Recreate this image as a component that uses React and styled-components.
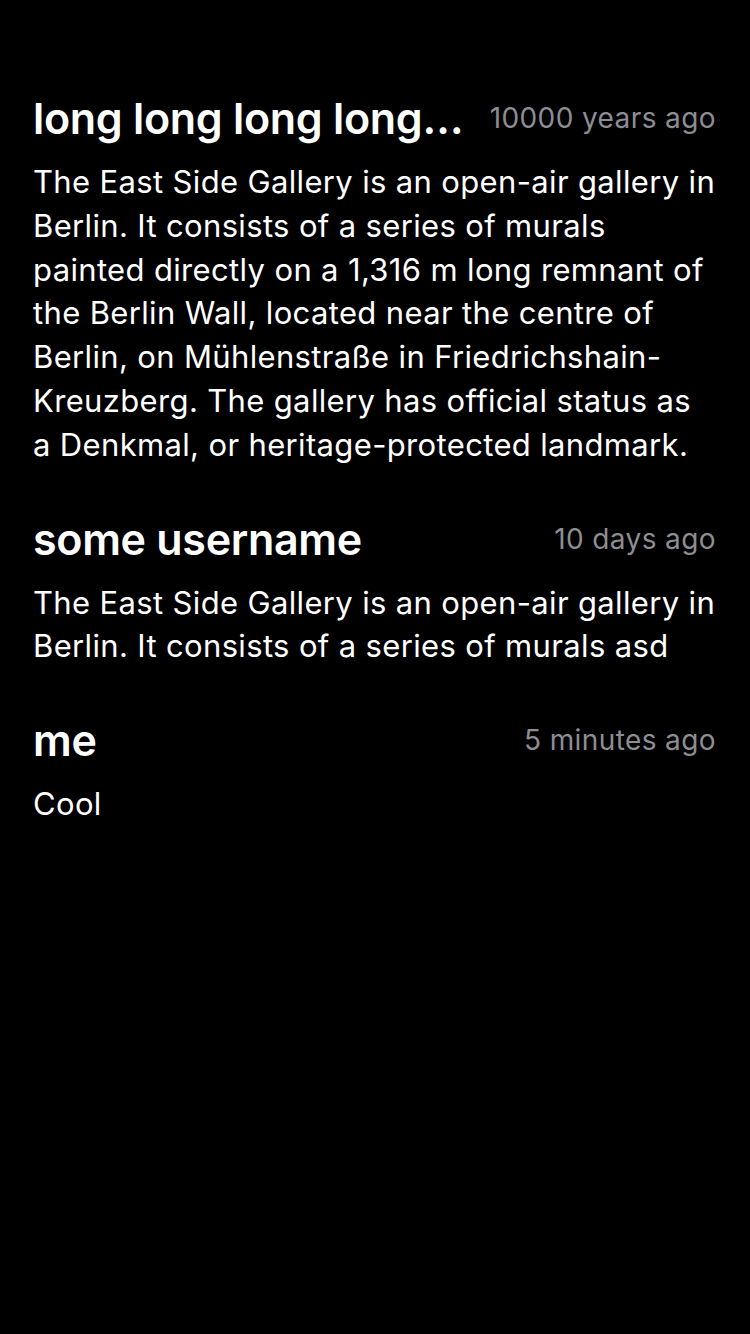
import React from "react";
import styled, { createGlobalStyle } from "styled-components";

const comments = [
  {
    id: 1,
    user: "long long long long long long long username",
    time: "10000 years ago",
    text:
      "The East Side Gallery is an open-air gallery in Berlin. It consists of a series of murals painted directly on a 1,316 m long remnant of the Berlin Wall, located near the centre of Berlin, on Mühlenstraße in Friedrichshain-Kreuzberg. The gallery has official status as a Denkmal, or heritage-protected landmark.",
  },
  {
    id: 2,
    user: "some username",
    time: "10 days ago",
    text:
      "The East Side Gallery is an open-air gallery in Berlin. It consists of a series of murals asd",
  },
  {
    id: 3,
    user: "me",
    time: "5 minutes ago",
    text: "Cool",
  },
];

const GlobalStyle = createGlobalStyle`
  html, body {
    margin: 0;
    padding: 0;
    background: #000;
  }
  body {
    font-family: Inter, "Noto Sans", "Liberation Sans", sans-serif;
    -webkit-font-smoothing: antialiased;
  }
`;

const App = () => {
  return (
    <Page>
      <GlobalStyle />
      <List>
        {comments.map((c) => (
          <Comment key={c.id}>
            <Header>
              <Username>{c.user}</Username>
              <Time>{c.time}</Time>
            </Header>
            <Body>{c.text}</Body>
          </Comment>
        ))}
      </List>
    </Page>
  );
};

const Page = styled.div`
  min-height: 1334px;
  background: #000;
  color: #fff;
  padding: 91px 34px 0 33px;
  box-sizing: border-box;
`;

const List = styled.div`
  display: flex;
  flex-direction: column;
  gap: 45px;
`;

const Comment = styled.div`
  display: flex;
  flex-direction: column;
  gap: 15px;
`;

const Header = styled.div`
  display: flex;
  align-items: center;
  justify-content: space-between;
  gap: 24px;
  height: 54px;
`;

const Username = styled.div`
  flex: 0 1 auto;
  min-width: 0;
  font-size: 43px;
  font-weight: 600;
  letter-spacing: -0.3px;
  line-height: 54px;
  white-space: nowrap;
  overflow: hidden;
  text-overflow: ellipsis;
`;

const Time = styled.div`
  flex: 0 0 auto;
  font-size: 28px;
  color: #8d8d92;
  letter-spacing: 0.4px;
`;

const Body = styled.div`
  font-size: 31px;
  line-height: 43.8px;
  letter-spacing: 0.35px;
  color: #fff;
`;

export default App;
